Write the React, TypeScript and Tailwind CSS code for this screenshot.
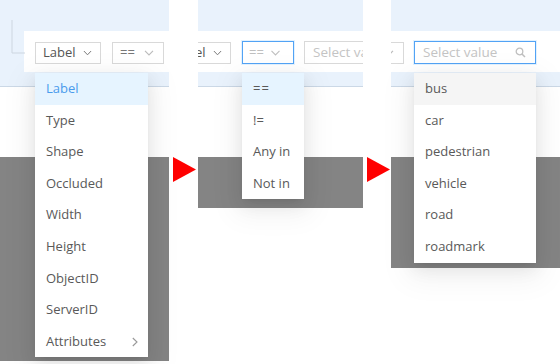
import React from "react";

const Chevron = ({ color = "#8c8c8c", w = 10 }: { color?: string; w?: number }) => (
  <svg width={w} height="6" viewBox="0 0 10 6" className="shrink-0">
    <polyline points="1,0.8 5,5 9,0.8" fill="none" stroke={color} strokeWidth="1.1" />
  </svg>
);

const Arrow = () => (
  <svg width="23" height="25" viewBox="0 0 23 25">
    <polygon points="0,0 23,12.5 0,25" fill="#ff0000" />
  </svg>
);

const Item = ({ children, cls = "" }: { children: React.ReactNode; cls?: string }) => (
  <div className={`h-[31.6px] flex items-center pl-[11px] pr-[10px] text-[13px] text-[#595959] ${cls}`}>{children}</div>
);

const Top = ({ children, pl = "pl-0" }: { children: React.ReactNode; pl?: string }) => (
  <div className={`bg-[#e9f2fc] pt-[31px] pb-[14px] border-b border-[#cbd8e6] ${pl}`}>
    <div className="bg-white h-[41px] flex items-start pt-[11px] overflow-hidden">{children}</div>
  </div>
);

export default function App() {
  return (
    <div
      className="w-[560px] h-[364px] bg-white flex items-start overflow-hidden"
      style={{ fontFamily: '"Open Sans", "Noto Sans", sans-serif' }}
    >
      {/* Panel 1 */}
      <div className="relative w-[169px] h-[361px] flex flex-col shrink-0">
        <Top pl="pl-[24px]">
          <div className="ml-[11px] w-[66px] h-[22px] border border-[#d9d9d9] flex items-center pl-[7px] text-[13px] text-[#555]">
            <span>Label</span>
            <span className="ml-[7px]"><Chevron color="#777" w={9} /></span>
          </div>
          <div className="ml-[11px] w-[52px] h-[22px] border border-[#d9d9d9] flex items-center pl-[7px] text-[13px] text-[#777]">
            <span>==</span>
            <span className="ml-[9px]"><Chevron color="#bbb" w={10} /></span>
          </div>
        </Top>
        <svg className="absolute left-[11px] top-[20px]" width="14" height="34" viewBox="0 0 14 34">
          <polyline points="1,0 1,33 14,33" fill="none" stroke="#cdd6e0" strokeWidth="1" />
        </svg>
        <div className="h-[70px] bg-white" />
        <div className="flex-1 bg-[#848484]" />
        <div className="absolute left-[35px] top-[73px] w-[113px] bg-white shadow-[0_3px_6px_-4px_rgba(0,0,0,0.12),0_6px_16px_0_rgba(0,0,0,0.08),0_9px_28px_8px_rgba(0,0,0,0.05)]">
          <Item cls="bg-[#e6f4ff] !text-[#4a9bec]">Label</Item>
          <Item>Type</Item>
          <Item>Shape</Item>
          <Item>Occluded</Item>
          <Item>Width</Item>
          <Item>Height</Item>
          <Item>ObjectID</Item>
          <Item>ServerID</Item>
          <Item cls="justify-between">
            <span>Attributes</span>
            <svg width="6" height="10" viewBox="0 0 6 10">
              <polyline points="0.8,1 5,5 0.8,9" fill="none" stroke="#999" strokeWidth="1.1" />
            </svg>
          </Item>
        </div>
      </div>

      <div className="w-[29px] shrink-0 pt-[157px] pl-[4px]">
        <Arrow />
      </div>

      {/* Panel 2 */}
      <div className="relative w-[165px] h-[208px] flex flex-col shrink-0">
        <Top>
          <div className="-ml-[33px] shrink-0 w-[66px] h-[22px] border border-[#d9d9d9] flex items-center pl-[7px] text-[13px] text-[#555]">
            <span>Label</span>
            <span className="ml-[7px]"><Chevron color="#777" w={9} /></span>
          </div>
          <div className="ml-[11px] shrink-0 w-[52px] h-[23px] -mt-[1px] border border-[#52a3f5] shadow-[0_0_0_1px_rgba(24,144,255,0.12)] flex items-center pl-[6px] text-[13px] text-[#bfbfbf]">
            <span>==</span>
            <span className="ml-[6px]"><Chevron color="#bfbfbf" w={11} /></span>
          </div>
          <div className="ml-[10px] shrink-0 w-[122px] h-[23px] -mt-[1px] border border-[#d9d9d9] flex items-center pl-[8px] text-[13.5px] text-[#c4c4c4]">
            <span>Select value</span>
          </div>
        </Top>
        <div className="h-[70px] bg-white" />
        <div className="flex-1 bg-[#848484]" />
        <div className="absolute left-[44px] top-[73px] w-[62px] bg-white shadow-[0_3px_6px_-4px_rgba(0,0,0,0.12),0_6px_16px_0_rgba(0,0,0,0.08),0_9px_28px_8px_rgba(0,0,0,0.05)]">
          <Item cls="bg-[#e6f4ff] tracking-[1px]">==</Item>
          <Item>!=</Item>
          <Item>Any in</Item>
          <Item>Not in</Item>
        </div>
      </div>

      <div className="w-[28px] shrink-0 pt-[157px] pl-[4px]">
        <Arrow />
      </div>

      {/* Panel 3 */}
      <div className="relative w-[169px] h-[268px] flex flex-col shrink-0">
        <Top>
          <div className="-ml-[39px] shrink-0 w-[52px] h-[22px] border border-[#d9d9d9] flex items-center pl-[7px] text-[13px] text-[#777]">
            <span>==</span>
            <span className="ml-[9px]"><Chevron color="#bbb" w={10} /></span>
          </div>
          <div className="ml-[10px] shrink-0 w-[122px] h-[23px] -mt-[1px] border border-[#52a3f5] shadow-[0_0_0_1px_rgba(24,144,255,0.12)] flex items-center pl-[8px] pr-[9px] text-[13.5px] text-[#c4c4c4] justify-between">
            <span>Select value</span>
            <svg width="11" height="11" viewBox="0 0 11 11">
              <circle cx="4.5" cy="4.5" r="3.3" fill="none" stroke="#bfbfbf" strokeWidth="1.3" />
              <line x1="7" y1="7" x2="10" y2="10" stroke="#bfbfbf" strokeWidth="1.5" />
            </svg>
          </div>
        </Top>
        <div className="h-[70px] bg-white" />
        <div className="flex-1 bg-[#848484]" />
        <div className="absolute left-[23px] top-[73px] w-[122px] bg-white shadow-[0_3px_6px_-4px_rgba(0,0,0,0.12),0_6px_16px_0_rgba(0,0,0,0.08),0_9px_28px_8px_rgba(0,0,0,0.05)]">
          <Item cls="bg-[#f5f5f5]">bus</Item>
          <Item>car</Item>
          <Item>pedestrian</Item>
          <Item>vehicle</Item>
          <Item>road</Item>
          <Item>roadmark</Item>
        </div>
      </div>
    </div>
  );
}
